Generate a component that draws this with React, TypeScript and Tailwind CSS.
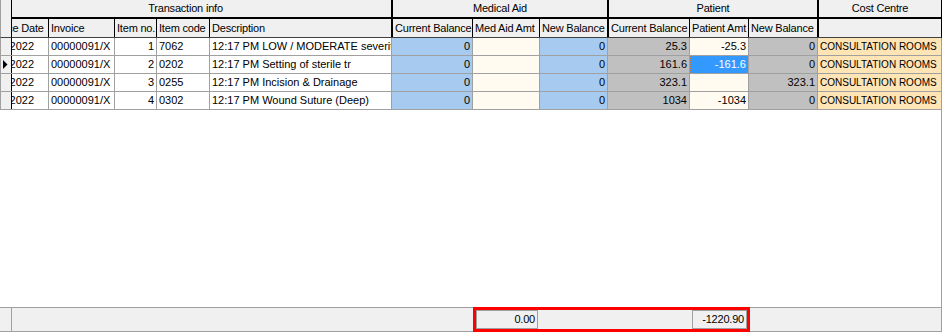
import React from 'react';

type Line = {
  no: number;
  code: string;
  desc: string;
  ptCurrent: string;
  ptAmt: string;
  ptNew: string;
  active?: boolean;
};

const lines: Line[] = [
  { no: 1, code: '7062', desc: '12:17 PM LOW / MODERATE severity', ptCurrent: '25.3', ptAmt: '-25.3', ptNew: '0' },
  { no: 2, code: '0202', desc: '12:17 PM Setting of sterile tr', ptCurrent: '161.6', ptAmt: '-161.6', ptNew: '0', active: true },
  { no: 3, code: '0255', desc: '12:17 PM Incision & Drainage', ptCurrent: '323.1', ptAmt: '', ptNew: '323.1' },
  { no: 4, code: '0302', desc: '12:17 PM Wound Suture (Deep)', ptCurrent: '1034', ptAmt: '-1034', ptNew: '0' },
];

const cell = 'h-full border-r border-[#a0a0a0] overflow-hidden whitespace-nowrap flex items-center';
const sub = 'h-full border-r border-black overflow-hidden whitespace-nowrap flex items-center pl-[2px]';

function Row({ line }: { line: Line }) {
  return (
    <div className="flex h-[18px] border-b border-[#a0a0a0] tracking-normal">
      <div className="w-[12px] h-full bg-[#f0f0f0] border-l border-l-[#a0a0a0] border-r border-r-black flex items-center pl-[2px]">
        {line.active && (
          <svg width="5" height="9" viewBox="0 0 5 9">
            <path d="M0 0L4.5 4.5L0 9Z" fill="#000" />
          </svg>
        )}
      </div>
      {/* grid is scrolled sideways, date column is partly hidden */}
      <div className={`${cell} w-[37px] bg-white`}>
        <span className="ml-[-33px]">13/05/2022</span>
      </div>
      <div className={`${cell} w-[66px] bg-white pl-[2px]`}>00000091/X</div>
      <div className={`${cell} w-[42px] bg-white justify-end pr-[2px]`}>{line.no}</div>
      <div className={`${cell} w-[53px] bg-white pl-[2px]`}>{line.code}</div>
      <div className={`${cell} w-[182px] bg-white pl-[2px]`}>{line.desc}</div>
      <div className={`${cell} w-[81px] bg-[#a6caf0] justify-end pr-[2px]`}>0</div>
      <div className={`${cell} w-[67px] bg-[#fffbf0]`} />
      <div className={`${cell} w-[68px] bg-[#a6caf0] justify-end pr-[2px]`}>0</div>
      <div className={`${cell} w-[82px] bg-[#c0c0c0] justify-end pr-[2px]`}>{line.ptCurrent}</div>
      {line.active ? (
        <div className={`${cell} w-[59px] bg-[#3399ff] text-white`}>
          <div className="w-full h-full border border-dotted border-[#c8782e] flex items-center justify-end pr-[1px]">
            {line.ptAmt}
          </div>
        </div>
      ) : (
        <div className={`${cell} w-[59px] bg-[#fffbf0] justify-end pr-[2px]`}>{line.ptAmt}</div>
      )}
      <div className={`${cell} w-[69px] bg-[#c0c0c0] justify-end pr-[2px]`}>{line.ptNew}</div>
      <div className={`${cell} w-[124px] bg-[#ffe4b5] pl-[2px] text-[10px]`}>CONSULTATION ROOMS</div>
    </div>
  );
}

export default function App() {
  return (
    <div className="relative w-[943px] h-[332px] bg-white flex flex-col text-[11px] tracking-[-0.2px] text-black font-['Liberation_Sans',Arial,sans-serif] leading-none">
      <div className="flex-1 flex flex-col w-[942px]">
        {/* two-level column header */}
        <div className="flex h-[38px] bg-[#f0f0f0]">
          <div className="w-[12px] h-full border-l border-l-[#a0a0a0] border-r border-r-black border-b border-b-[#404040]" />
          <div className="flex flex-col w-[381px]">
            <div className="h-[19px] border-b-2 border-r-2 border-black flex items-center justify-center pr-[32px]">
              Transaction info
            </div>
            <div className="flex h-[19px] border-b border-[#404040]">
              <div className={`${sub} w-[37px] pl-0`}>
                <span className="ml-[-29px]">Invoice Date</span>
              </div>
              <div className={`${sub} w-[66px]`}>Invoice</div>
              <div className={`${sub} w-[42px] pl-[1px]`}>Item no.</div>
              <div className={`${sub} w-[53px] pl-[1px]`}>Item code</div>
              <div className={`${sub} w-[183px] border-r-2`}>Description</div>
            </div>
          </div>
          <div className="flex flex-col w-[216px]">
            <div className="h-[19px] border-b-2 border-r-2 border-black flex items-center justify-center">
              Medical Aid
            </div>
            <div className="flex h-[19px] border-b border-[#404040]">
              <div className={`${sub} w-[80px] pl-[1px]`}>Current Balance</div>
              <div className={`${sub} w-[67px]`}>Med Aid Amt</div>
              <div className={`${sub} w-[69px] border-r-2`}>New Balance</div>
            </div>
          </div>
          <div className="flex flex-col w-[210px]">
            <div className="h-[19px] border-b-2 border-r-2 border-black flex items-center justify-center">
              Patient
            </div>
            <div className="flex h-[19px] border-b border-[#404040]">
              <div className={`${sub} w-[81px] pl-[1px]`}>Current Balance</div>
              <div className={`${sub} w-[59px] pl-[1px]`}>Patient Amt</div>
              <div className={`${sub} w-[70px] border-r-2 pl-[1px]`}>New Balance</div>
            </div>
          </div>
          <div className="flex flex-col w-[123px]">
            <div className="h-[19px] border-b-2 border-r border-black flex items-center justify-center">
              Cost Centre
            </div>
            <div className="h-[19px] border-b border-r border-b-[#404040] border-r-black" />
          </div>
        </div>

        {lines.map((line) => (
          <Row key={line.no} line={line} />
        ))}

        <div className="flex-1 border-r border-[#a0a0a0]" />
      </div>

      {/* totals bar */}
      <div className="flex items-center h-[25px] w-[942px] bg-[#f0f0f0] border-t border-b border-r border-[#a0a0a0]">
        <div className="w-[12px] self-stretch border-r border-[#a0a0a0]" />
        <div className="ml-[464px] w-[62px] h-[19px] border border-[#a0a0a0] flex items-center justify-end pr-[2px]">
          0.00
        </div>
        <div className="ml-[154px] w-[55px] h-[19px] border border-[#a0a0a0] flex items-center justify-end pr-[2px]">
          -1220.90
        </div>
      </div>

      <div className="absolute left-[473px] top-[307px] w-[277px] h-[25px] border-[3px] border-[#ff0000]" />
    </div>
  );
}
